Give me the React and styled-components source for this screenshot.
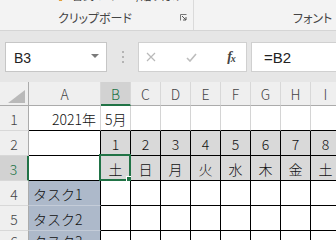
import React from 'react'
import styled, { createGlobalStyle } from 'styled-components'

const Global = createGlobalStyle`
  html, body { margin: 0; padding: 0; }
  body {
    width: 336px;
    height: 240px;
    overflow: hidden;
    background: #e6e6e6;
    font-family: "Noto Sans CJK JP", "Liberation Sans", sans-serif;
  }
`

const Ribbon = styled.div`
  height: 30px;
  display: flex;
  background: #f3f3f3;
  border-bottom: 1px solid #d5d5d5;
  overflow: hidden;
`

const Group = styled.div`
  width: ${p => p.$w}px;
  flex: ${p => (p.$w ? 'none' : '1')};
  border-right: ${p => (p.$w ? '1px solid #dadada' : 'none')};
  display: flex;
  flex-direction: column;
  justify-content: space-between;
  color: #444;
  font-size: 12px;
  font-feature-settings: "palt";
`

const ClippedRow = styled.div`
  display: flex;
  align-items: center;
  gap: 8px;
  height: 16px;
  margin-top: -13px;
  padding-left: 57px;
  font-size: 11px;
  color: #333;
  white-space: nowrap;
`

const GroupLabel = styled.div`
  display: flex;
  align-items: center;
  height: 18px;
  padding-left: ${p => p.$pad}px;
  padding-bottom: 4px;
  white-space: nowrap;
`

const Launcher = styled.svg`
  margin-left: auto;
  margin-right: 6px;
`

const FormulaArea = styled.div`
  height: 51px;
  box-sizing: border-box;
  display: flex;
  align-items: flex-start;
  padding: 11px 0 0 5px;
  background: #e6e6e6;
`

const NameBox = styled.div`
  width: 102px;
  height: 30px;
  box-sizing: border-box;
  background: #fff;
  border: 1px solid #c6c6c6;
  display: flex;
  align-items: center;
  justify-content: space-between;
  padding: 2px 7px 0 8px;
  font: 14px "Liberation Sans", sans-serif;
  color: #222;
`

const Caret = styled.span`
  width: 0;
  height: 0;
  border-left: 4px solid transparent;
  border-right: 4px solid transparent;
  border-top: 4px solid #7a7a7a;
  margin-top: -4px;
`

const Dots = styled.div`
  width: 31px;
  height: 30px;
  display: flex;
  flex-direction: column;
  align-items: center;
  justify-content: center;
  gap: 3px;

  span {
    width: 2px;
    height: 2px;
    background: #b4b4b4;
  }
`

const FxBox = styled.div`
  width: 109px;
  height: 30px;
  box-sizing: border-box;
  background: #fff;
  border: 1px solid #d0d0d0;
  display: flex;
  align-items: center;
  padding-left: 7px;
`

const FxButton = styled.div`
  width: ${p => p.$w}px;
  display: flex;
  justify-content: center;
  align-items: center;
`

const Fx = styled.span`
  font: italic bold 14px "Liberation Serif", serif;
  color: #444;
  letter-spacing: -1px;

  sub {
    font-size: 10px;
    vertical-align: -1px;
  }
`

const FormulaInput = styled.div`
  flex: 1;
  height: 30px;
  margin-left: 4px;
  box-sizing: border-box;
  background: #fff;
  border: 1px solid #d0d0d0;
  border-right: none;
  display: flex;
  align-items: center;
  padding: 1px 0 0 12px;
  font: 15px "Liberation Sans", sans-serif;
  color: #222;
`

const Sheet = styled.div`
  display: grid;
  grid-template-columns: 29px 72px repeat(8, 30px);
  grid-template-rows: 24px repeat(5, 25px) 10px;
  overflow: hidden;
  background: #fff;
  font-size: 14px;
  font-weight: 300;
`

const ColHead = styled.div`
  box-sizing: border-box;
  display: flex;
  align-items: center;
  justify-content: center;
  background: ${p => (p.$on ? '#d2d2d2' : '#efefef')};
  color: ${p => (p.$on ? '#217346' : '#444')};
  border-right: 1px solid #d8d8d8;
  border-bottom: ${p => (p.$on ? '2px solid #217346' : '1px solid #ababab')};
  padding-top: ${p => (p.$on ? '1px' : '0')};
`

const Corner = styled.div`
  box-sizing: border-box;
  background: #efefef;
  border-right: 1px solid #ababab;
  border-bottom: 1px solid #ababab;
  display: flex;
  align-items: flex-end;
  justify-content: flex-end;
  padding: 0 3px 2px 0;
`

const RowHead = styled.div`
  box-sizing: border-box;
  display: flex;
  align-items: ${p => (p.$cut ? 'flex-start' : 'center')};
  justify-content: center;
  padding-top: ${p => (p.$cut ? '0' : '2px')};
  overflow: hidden;
  background: ${p => (p.$on ? '#d2d2d2' : '#efefef')};
  color: ${p => (p.$on ? '#217346' : '#444')};
  border-right: ${p => (p.$on ? '2px solid #217346' : '1px solid #ababab')};
  border-bottom: 1px solid #d8d8d8;
`

const Cell = styled.div`
  position: relative;
  box-sizing: border-box;
  display: flex;
  align-items: ${p => (p.$cut ? 'flex-start' : 'center')};
  justify-content: ${p => p.$align || 'flex-start'};
  padding: ${p => (p.$cut ? '0 4px' : '2px 4px 0')};
  background: ${p => p.$fill || '#fff'};
  border-right: 1px solid ${p => p.$r || '#d4d4d4'};
  border-bottom: 1px solid ${p => p.$b || '#d4d4d4'};
  color: #111;
  white-space: nowrap;
  overflow: ${p => (p.$cut ? 'hidden' : 'visible')};
`

const Selection = styled.div`
  position: absolute;
  left: -2px;
  top: -2px;
  right: -1px;
  bottom: -1px;
  border: 2px solid #217346;
  pointer-events: none;

  &::after {
    content: '';
    position: absolute;
    right: -4px;
    bottom: -4px;
    width: 5px;
    height: 5px;
    background: #217346;
    border: 1px solid #fff;
  }
`

const GRAY = '#d9d9d9'
const BLUE = '#adb9ca'
const BLACK = '#000'

const cols = ['A', 'B', 'C', 'D', 'E', 'F', 'G', 'H', 'I']
const days = ['土', '日', '月', '火', '水', '木', '金', '土']

const rowCells = row => {
  const cells = []
  if (row === 1) {
    cells.push({ text: '2021年', align: 'flex-end', b: BLACK })
    cells.push({ text: '5月', b: BLACK })
    for (let i = 0; i < 7; i++) cells.push({ b: BLACK })
  } else if (row === 2 || row === 3) {
    cells.push({ r: BLACK, b: BLACK })
    for (let i = 0; i < 8; i++) {
      cells.push({
        text: row === 2 ? String(i + 1) : days[i],
        align: 'center',
        fill: GRAY,
        r: BLACK,
        b: BLACK,
        sel: row === 3 && i === 0,
      })
    }
  } else {
    cells.push({ text: `タスク${row - 3}`, fill: BLUE, r: BLACK, b: '#c4ccd8' })
    for (let i = 0; i < 8; i++) cells.push({ r: BLACK, b: BLACK })
  }
  return cells
}

const BrushIcon = () => (
  <svg width="7" height="16" viewBox="0 0 7 16">
    <path d="M1 8 L6 8 L5 14 L2 14 Z" fill="#e2a13d" />
  </svg>
)

export default function App() {
  return (
    <>
      <Global />
      <Ribbon>
        <Group $w={193}>
          <ClippedRow>
            <BrushIcon />
            <span>書式のコピー/貼り付け</span>
          </ClippedRow>
          <GroupLabel $pad={58}>
            クリップボード
            <Launcher width="7" height="7" viewBox="0 0 7 7">
              <path d="M0.5 6.5 V0.5 H6.5" stroke="#777" fill="none" />
              <path d="M2 2 L6 6 M6 3 V6 H3" stroke="#555" fill="none" />
            </Launcher>
          </GroupLabel>
        </Group>
        <Group>
          <ClippedRow />
          <GroupLabel $pad={99}>フォント</GroupLabel>
        </Group>
      </Ribbon>

      <FormulaArea>
        <NameBox>
          B3
          <Caret />
        </NameBox>
        <Dots>
          <span />
          <span />
          <span />
        </Dots>
        <FxBox>
          <FxButton $w={10}>
            <svg width="10" height="10" viewBox="0 0 10 10">
              <path d="M1 1 L9 9 M9 1 L1 9" stroke="#b9b9b9" strokeWidth="1.2" />
            </svg>
          </FxButton>
          <FxButton $w={70}>
            <svg width="11" height="9" viewBox="0 0 11 9">
              <path d="M1 5 L4 8 L10 1" stroke="#bdbdbd" strokeWidth="1.6" fill="none" />
            </svg>
          </FxButton>
          <FxButton $w={10}>
            <Fx>
              f<sub>x</sub>
            </Fx>
          </FxButton>
        </FxBox>
        <FormulaInput>=B2</FormulaInput>
      </FormulaArea>

      <Sheet>
        <Corner>
          <svg width="17" height="13" viewBox="0 0 17 13">
            <path d="M17 0 L17 13 L0 13 Z" fill="#b9b9b9" />
          </svg>
        </Corner>
        {cols.map(c => (
          <ColHead key={c} $on={c === 'B'}>
            {c}
          </ColHead>
        ))}
        {[1, 2, 3, 4, 5, 6].map(row => (
          <React.Fragment key={row}>
            <RowHead $on={row === 3} $cut={row === 6}>
              {row}
            </RowHead>
            {rowCells(row).map((c, i) => (
              <Cell key={i} $align={c.align} $fill={c.fill} $r={c.r} $b={c.b} $cut={row === 6}>
                {c.text}
                {c.sel && <Selection />}
              </Cell>
            ))}
          </React.Fragment>
        ))}
      </Sheet>
    </>
  )
}
